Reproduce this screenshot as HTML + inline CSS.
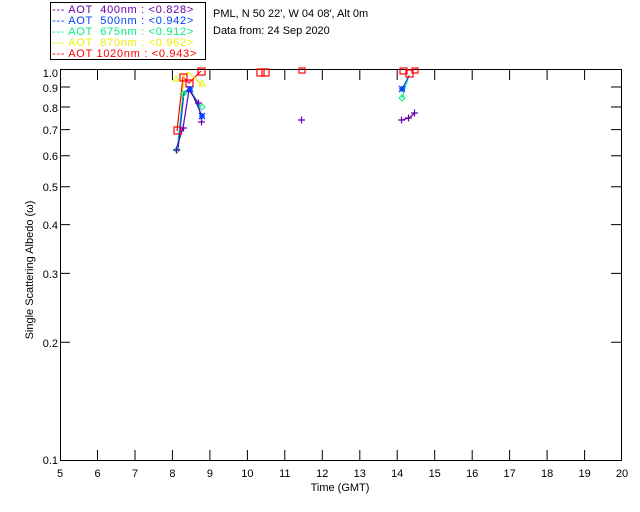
<!DOCTYPE html><html><head><style>body{margin:0;background:#fff}svg{display:block}text{font-family:"Liberation Sans",sans-serif;font-size:11px}</style></head><body>
<svg width="640" height="512" xmlns="http://www.w3.org/2000/svg">
<rect x="50.5" y="2.5" width="155" height="57" fill="none" stroke="#000"/>
<g font-size="10.5" letter-spacing="0.7">
<text x="52" y="13" fill="#6a00b0">--- AOT &#160;400nm : &lt;0.828&gt;</text>
<text x="52" y="24" fill="#0040ff">--- AOT &#160;500nm : &lt;0.942&gt;</text>
<text x="52" y="35" fill="#00ee80">--- AOT &#160;675nm : &lt;0.912&gt;</text>
<text x="52" y="46" fill="#eeee00">--- AOT &#160;870nm : &lt;0.962&gt;</text>
<text x="52" y="57" fill="#ff0000">--- AOT 1020nm : &lt;0.943&gt;</text>
</g>
<text x="213" y="17" font-size="10.2">PML, N 50 22', W 04 08', Alt 0m</text>
<text x="213" y="34" font-size="10.2">Data from: 24 Sep 2020</text>
<rect x="60.5" y="69.5" width="561" height="391" fill="none" stroke="#000"/>
<g stroke="#000">
<path d="M97.5 460v-10M135 460v-10M172.4 460v-10M209.9 460v-10M247.4 460v-10M284.8 460v-10M322.3 460v-10M359.8 460v-10M397.2 460v-10M434.7 460v-10M472.2 460v-10M509.6 460v-10M547.1 460v-10M584.6 460v-10"/>
<path d="M97.5 70v10M135 70v10M172.4 70v10M209.9 70v10M247.4 70v10M284.8 70v10M322.3 70v10M359.8 70v10M397.2 70v10M434.7 70v10M472.2 70v10M509.6 70v10M547.1 70v10M584.6 70v10"/>
<path d="M60 87h10M60 107h10M60 129.6h10M60 155.7h10M60 186.7h10M60 224.6h10M60 273.4h10M60 342.3h10"/>
<path d="M621 87h-10M621 107h-10M621 129.6h-10M621 155.7h-10M621 186.7h-10M621 224.6h-10M621 273.4h-10M621 342.3h-10"/>
</g>
<g font-size="10.5" text-anchor="end">
<text x="58" y="77">1.0</text><text x="58" y="92">0.9</text><text x="58" y="112">0.8</text><text x="58" y="134">0.7</text><text x="58" y="160">0.6</text><text x="58" y="191">0.5</text><text x="58" y="229">0.4</text><text x="58" y="278">0.3</text><text x="58" y="347">0.2</text><text x="58" y="464">0.1</text>
</g>
<g font-size="10.5" text-anchor="middle">
<text x="60" y="477">5</text><text x="97.5" y="477">6</text><text x="135" y="477">7</text><text x="172.4" y="477">8</text><text x="209.9" y="477">9</text><text x="247.4" y="477">10</text><text x="284.8" y="477">11</text><text x="322.3" y="477">12</text><text x="359.8" y="477">13</text><text x="397.2" y="477">14</text><text x="434.7" y="477">15</text><text x="472.2" y="477">16</text><text x="509.6" y="477">17</text><text x="547.1" y="477">18</text><text x="584.6" y="477">19</text><text x="622" y="477">20</text>
<text x="340" y="491">Time (GMT)</text>
<text transform="translate(33,270) rotate(-90)">Single Scattering Albedo (ω)</text>
</g>
<g fill="none" stroke-width="1.2">
<polyline stroke="#ff0000" points="177,131 183,77 189,83 201,71"/>
<polyline stroke="#eeee00" points="178,150 184,75 188,72 202,85"/>
<polyline stroke="#00ee80" points="177,151 183,95 190,90 201,107"/>
<polyline stroke="#0040ff" points="178,150 184,92 190,89 202,116"/>
<polyline stroke="#6a00b0" points="176,150 183,128 189,90 198,103 202,122"/>
<polyline stroke="#00ee80" points="402,98 409,75"/>
<polyline stroke="#0040ff" points="402,89 409,76"/>
<polyline stroke="#6a00b0" points="402,120 409,118 415,113"/>
</g>
<g fill="none" stroke="#ff0000" stroke-width="1.2">
<rect x="174" y="127" width="7" height="7"/><rect x="180" y="74" width="7" height="7"/><rect x="186" y="80" width="7" height="7"/><rect x="198" y="68" width="7" height="7"/><rect x="257" y="69" width="7" height="7"/><rect x="262" y="69" width="7" height="7"/><rect x="299" y="68" width="6" height="5"/><rect x="400" y="68" width="7" height="6"/><rect x="406" y="70" width="7" height="7"/><rect x="412" y="68" width="6" height="5"/>
</g>
<g fill="none" stroke="#eeee00"><path d="M202 80l-3 6h6z M176 76l-3 5h6z"/></g>
<g fill="none" stroke="#00ee80"><path d="M177 147l3 3-3 3-3-3z M183 91l3 3-3 3-3-3z M202 104l3 3-3 3-3-3z M402 95l3 3-3 3-3-3z"/></g>
<g stroke="#0040ff" stroke-width="1.3"><path d="M187 89h6M190 86v6M187 86l6 6M193 86l-6 6 M199 116h6M202 113v6M199 113l6 6M205 113l-6 6 M399 89h6M402 86v6M399 86l6 6M405 86l-6 6"/></g>
<g stroke="#6a00b0" stroke-width="1.2"><path d="M173 150h7M176.5 146.5v7 M180 128h7M183.5 124.5v7 M195 103h7M198.5 99.5v7 M198 122h7M201.5 118.5v7 M298 120h7M301.5 116.5v7 M398 120h7M401.5 116.5v7 M405 118h7M408.5 114.5v7 M411 113h7M414.5 109.5v7"/></g>
</svg></body></html>
